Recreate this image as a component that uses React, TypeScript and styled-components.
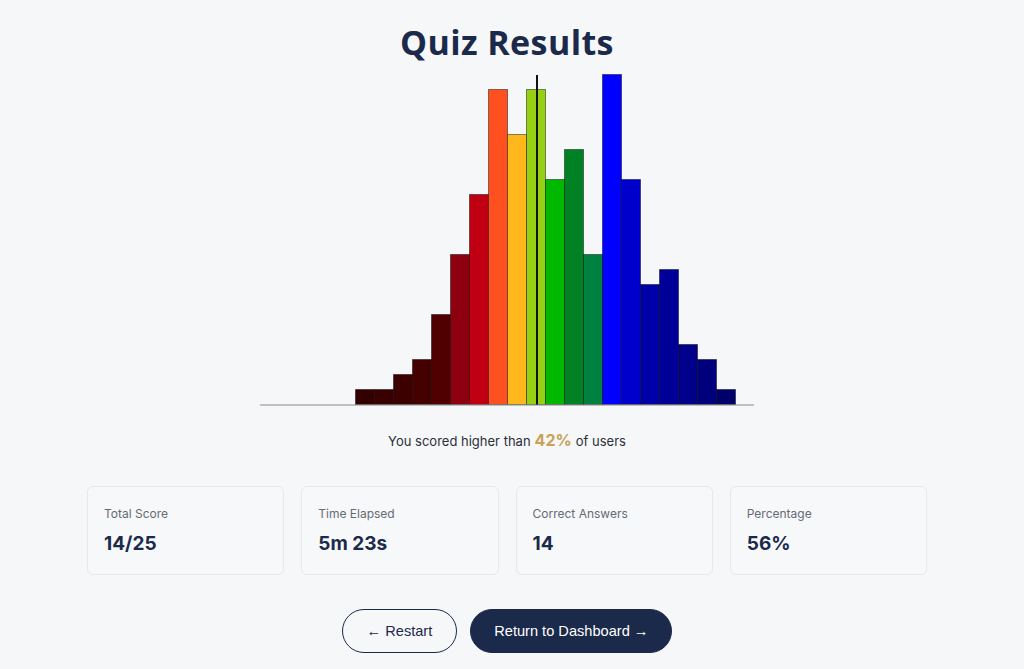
import React from "react";
import styled, { createGlobalStyle } from "styled-components";

const GlobalStyle = createGlobalStyle`
  html, body { margin: 0; padding: 0; background: #f6f7f9; }
  body { font-family: Inter, "Liberation Sans", sans-serif; color: #1b2a4a; }
  * { box-sizing: border-box; }
`;

const Page = styled.main`
  display: flex;
  flex-direction: column;
  align-items: center;
  padding: 20px 10px 0 0;
`;

const Title = styled.h1`
  margin: 0;
  font-family: "Open Sans", sans-serif;
  font-weight: 700;
  font-size: 34px;
  line-height: 44px;
  color: #1b2a4a;
  letter-spacing: 0.4px;
`;

const ChartWrap = styled.div`
  margin-top: 6px;
  width: 494px;
  height: 340px;
`;

const Percentile = styled.p`
  margin: 20px 0 0;
  font-size: 13px;
  color: #2b2f38;
  display: flex;
  align-items: baseline;
  gap: 4px;
`;

const Highlight = styled.span`
  font-weight: 700;
  font-size: 16px;
  color: #c9a256;
`;

const Cards = styled.section`
  margin-top: 36px;
  width: 840px;
  display: grid;
  grid-template-columns: repeat(4, 1fr);
  gap: 17px;
`;

const Card = styled.div`
  height: 89px;
  background: #f7f8fa;
  border: 1px solid #e6e8ec;
  border-radius: 6px;
  padding: 19px 16px 0;
`;

const Label = styled.div`
  font-size: 12px;
  color: #666b73;
  line-height: 16px;
`;

const Value = styled.div`
  margin-top: 10px;
  font-size: 19px;
  font-weight: 700;
  color: #1b2a4a;
  line-height: 24px;
`;

const Actions = styled.div`
  margin-top: 34px;
  display: flex;
  gap: 13px;
`;

const Button = styled.button<{ $primary?: boolean }>`
  height: 44px;
  border-radius: 22px;
  padding: 0 ${(p) => (p.$primary ? "23px" : "24px")};
  font-family: "Liberation Sans", Arial, sans-serif;
  font-size: 14.6px;
  cursor: pointer;
  border: 1.5px solid #1b2a4a;
  background: ${(p) => (p.$primary ? "#1b2a4a" : "transparent")};
  color: ${(p) => (p.$primary ? "#ffffff" : "#1b2a4a")};
`;

const values = [0, 0, 0, 0, 0, 1, 1, 2, 3, 6, 10, 14, 21, 18, 21, 15, 17, 10, 22, 15, 8, 9, 4, 3, 1, 0];
const colors = [
  "", "", "", "", "",
  "#330000", "#380000", "#3c0000", "#450000", "#500000",
  "#8e0010", "#c00012", "#ff5020", "#ffb81c", "#96d012",
  "#00b800", "#008224", "#00813f", "#0000ff", "#0000cc",
  "#0000aa", "#000099", "#00008a", "#00007c", "#00006a", "",
];

const Histogram: React.FC = () => {
  const w = 19;
  const base = 334.5;
  return (
    <svg width="494" height="340" viewBox="0 0 494 340">
      {values.map((v, i) =>
        v > 0 ? (
          <rect
            key={i}
            x={i * w + 0.5}
            y={base - v * 15}
            width={w}
            height={v * 15}
            fill={colors[i]}
            stroke="rgba(0,0,0,0.45)"
            strokeWidth={1}
          />
        ) : null
      )}
      <line x1="0" y1={base + 0.5} x2="494" y2={base + 0.5} stroke="#8a8a8a" strokeWidth="1" />
      <line x1="277" y1="5" x2="277" y2={base} stroke="#111" strokeWidth="2" />
    </svg>
  );
};

const stats = [
  { label: "Total Score", value: "14/25" },
  { label: "Time Elapsed", value: "5m 23s" },
  { label: "Correct Answers", value: "14" },
  { label: "Percentage", value: "56%" },
];

export default function App() {
  return (
    <>
      <GlobalStyle />
      <Page>
        <Title>Quiz Results</Title>
        <ChartWrap>
          <Histogram />
        </ChartWrap>
        <Percentile>
          You scored higher than <Highlight>42%</Highlight> of users
        </Percentile>
        <Cards>
          {stats.map((s) => (
            <Card key={s.label}>
              <Label>{s.label}</Label>
              <Value>{s.value}</Value>
            </Card>
          ))}
        </Cards>
        <Actions>
          <Button>← Restart</Button>
          <Button $primary>Return to Dashboard →</Button>
        </Actions>
      </Page>
    </>
  );
}
